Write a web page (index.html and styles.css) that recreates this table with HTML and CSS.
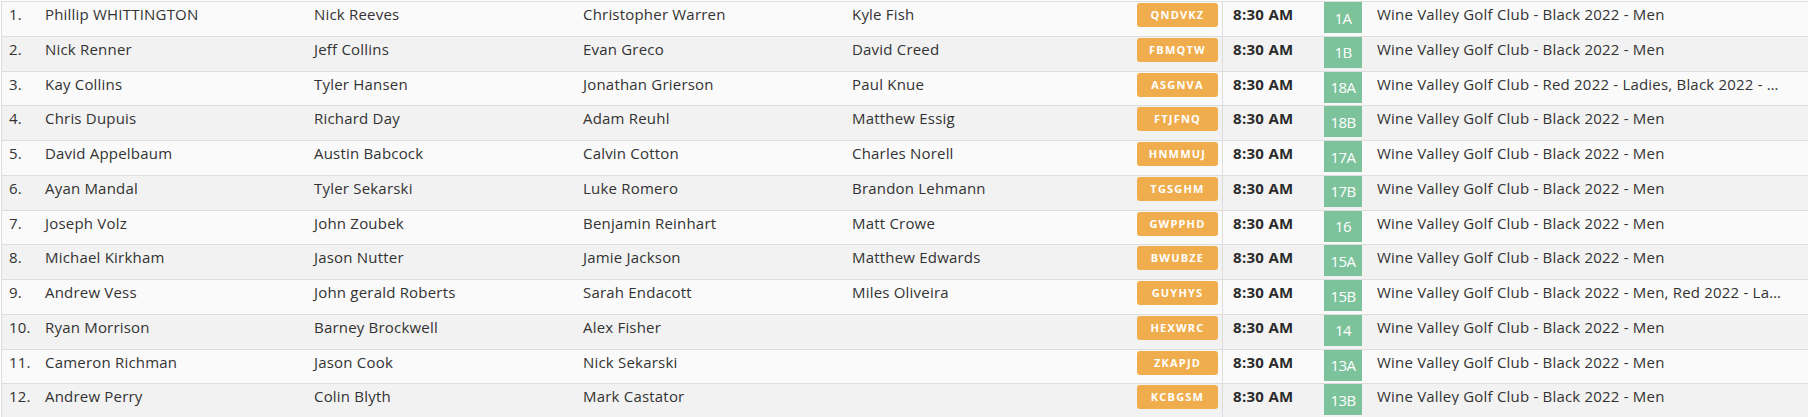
FILE: index.html
```html
<!DOCTYPE html>
<html lang="en">
<head>
<meta charset="utf-8">
<title>Pairings</title>
<link rel="stylesheet" href="styles.css">
</head>
<body>
<div class="table">
  <div class="row">
    <div class="num">1.</div><div class="name">Phillip WHITTINGTON</div><div class="name">Nick Reeves</div><div class="name">Christopher Warren</div><div class="name">Kyle Fish</div>
    <div class="code"><span class="badge">QNDVKZ</span></div><div class="time">8:30 AM</div><div class="hole"><span class="tee">1A</span></div><div class="course">Wine Valley Golf Club - Black 2022 - Men</div>
  </div>
  <div class="row">
    <div class="num">2.</div><div class="name">Nick Renner</div><div class="name">Jeff Collins</div><div class="name">Evan Greco</div><div class="name">David Creed</div>
    <div class="code"><span class="badge">FBMQTW</span></div><div class="time">8:30 AM</div><div class="hole"><span class="tee">1B</span></div><div class="course">Wine Valley Golf Club - Black 2022 - Men</div>
  </div>
  <div class="row">
    <div class="num">3.</div><div class="name">Kay Collins</div><div class="name">Tyler Hansen</div><div class="name">Jonathan Grierson</div><div class="name">Paul Knue</div>
    <div class="code"><span class="badge">ASGNVA</span></div><div class="time">8:30 AM</div><div class="hole"><span class="tee">18A</span></div><div class="course">Wine Valley Golf Club - Red 2022 - Ladies, Black 2022 - Men</div>
  </div>
  <div class="row">
    <div class="num">4.</div><div class="name">Chris Dupuis</div><div class="name">Richard Day</div><div class="name">Adam Reuhl</div><div class="name">Matthew Essig</div>
    <div class="code"><span class="badge">FTJFNQ</span></div><div class="time">8:30 AM</div><div class="hole"><span class="tee">18B</span></div><div class="course">Wine Valley Golf Club - Black 2022 - Men</div>
  </div>
  <div class="row">
    <div class="num">5.</div><div class="name">David Appelbaum</div><div class="name">Austin Babcock</div><div class="name">Calvin Cotton</div><div class="name">Charles Norell</div>
    <div class="code"><span class="badge">HNMMUJ</span></div><div class="time">8:30 AM</div><div class="hole"><span class="tee">17A</span></div><div class="course">Wine Valley Golf Club - Black 2022 - Men</div>
  </div>
  <div class="row">
    <div class="num">6.</div><div class="name">Ayan Mandal</div><div class="name">Tyler Sekarski</div><div class="name">Luke Romero</div><div class="name">Brandon Lehmann</div>
    <div class="code"><span class="badge">TGSGHM</span></div><div class="time">8:30 AM</div><div class="hole"><span class="tee">17B</span></div><div class="course">Wine Valley Golf Club - Black 2022 - Men</div>
  </div>
  <div class="row">
    <div class="num">7.</div><div class="name">Joseph Volz</div><div class="name">John Zoubek</div><div class="name">Benjamin Reinhart</div><div class="name">Matt Crowe</div>
    <div class="code"><span class="badge">GWPPHD</span></div><div class="time">8:30 AM</div><div class="hole"><span class="tee">16</span></div><div class="course">Wine Valley Golf Club - Black 2022 - Men</div>
  </div>
  <div class="row">
    <div class="num">8.</div><div class="name">Michael Kirkham</div><div class="name">Jason Nutter</div><div class="name">Jamie Jackson</div><div class="name">Matthew Edwards</div>
    <div class="code"><span class="badge">BWUBZE</span></div><div class="time">8:30 AM</div><div class="hole"><span class="tee">15A</span></div><div class="course">Wine Valley Golf Club - Black 2022 - Men</div>
  </div>
  <div class="row">
    <div class="num">9.</div><div class="name">Andrew Vess</div><div class="name">John gerald Roberts</div><div class="name">Sarah Endacott</div><div class="name">Miles Oliveira</div>
    <div class="code"><span class="badge">GUYHYS</span></div><div class="time">8:30 AM</div><div class="hole"><span class="tee">15B</span></div><div class="course">Wine Valley Golf Club - Black 2022 - Men, Red 2022 - Ladies</div>
  </div>
  <div class="row">
    <div class="num">10.</div><div class="name">Ryan Morrison</div><div class="name">Barney Brockwell</div><div class="name">Alex Fisher</div><div class="name"></div>
    <div class="code"><span class="badge">HEXWRC</span></div><div class="time">8:30 AM</div><div class="hole"><span class="tee">14</span></div><div class="course">Wine Valley Golf Club - Black 2022 - Men</div>
  </div>
  <div class="row">
    <div class="num">11.</div><div class="name">Cameron Richman</div><div class="name">Jason Cook</div><div class="name">Nick Sekarski</div><div class="name"></div>
    <div class="code"><span class="badge">ZKAPJD</span></div><div class="time">8:30 AM</div><div class="hole"><span class="tee">13A</span></div><div class="course">Wine Valley Golf Club - Black 2022 - Men</div>
  </div>
  <div class="row">
    <div class="num">12.</div><div class="name">Andrew Perry</div><div class="name">Colin Blyth</div><div class="name">Mark Castator</div><div class="name"></div>
    <div class="code"><span class="badge">KCBGSM</span></div><div class="time">8:30 AM</div><div class="hole"><span class="tee">13B</span></div><div class="course">Wine Valley Golf Club - Black 2022 - Men</div>
  </div>
</div>
</body>
</html>
```
FILE: styles.css
```css
html, body {
  margin: 0;
  padding: 0;
  background: #ffffff;
}
body {
  font-family: "Open Sans", Arial, sans-serif;
  color: #333333;
  font-size: 15px;
  letter-spacing: 0.2px;
  overflow: hidden;
}
.table {
  margin: 1px 0 0 1px;
  border-left: 1px solid #dddddd;
}
.row {
  display: grid;
  grid-template-columns: 35px 269px 269px 269px 285px 94px 93px 54px minmax(0, 1fr);
  height: 34.75px;
  box-sizing: border-box;
  border-top: 1px solid #dddddd;
  background: #fafafa;
  align-items: start;
}
.row:nth-child(even) {
  background: #f2f2f2;
}
.num, .name, .course {
  padding-top: 3px;
  line-height: 18px;
  white-space: nowrap;
}
.num {
  padding-left: 7px;
}
.name {
  padding-left: 8px;
}
.code {
  align-self: stretch;
  border-right: 1px solid #dddddd;
  padding: 1px 0 0 8px;
}
.badge {
  display: block;
  width: 81px;
  height: 24px;
  line-height: 24px;
  background: #f0ad4e;
  color: #ffffff;
  border-radius: 3px;
  text-align: center;
  font-weight: 700;
  font-size: 11px;
  letter-spacing: 1.2px;
}
.time {
  padding: 3px 0 0 10px;
  line-height: 18px;
  font-weight: 700;
  font-size: 15px;
  letter-spacing: 0.3px;
  color: #2b2b2b;
}
.hole {
  padding-left: 8px;
}
.tee {
  display: flex;
  align-items: center;
  justify-content: center;
  width: 38px;
  height: 31px;
  background: #7cc29b;
  color: #ffffff;
  font-size: 15px;
  letter-spacing: -0.6px;
}
.course {
  padding-left: 7px;
  padding-right: 22px;
  overflow: hidden;
  text-overflow: ellipsis;
}
```
